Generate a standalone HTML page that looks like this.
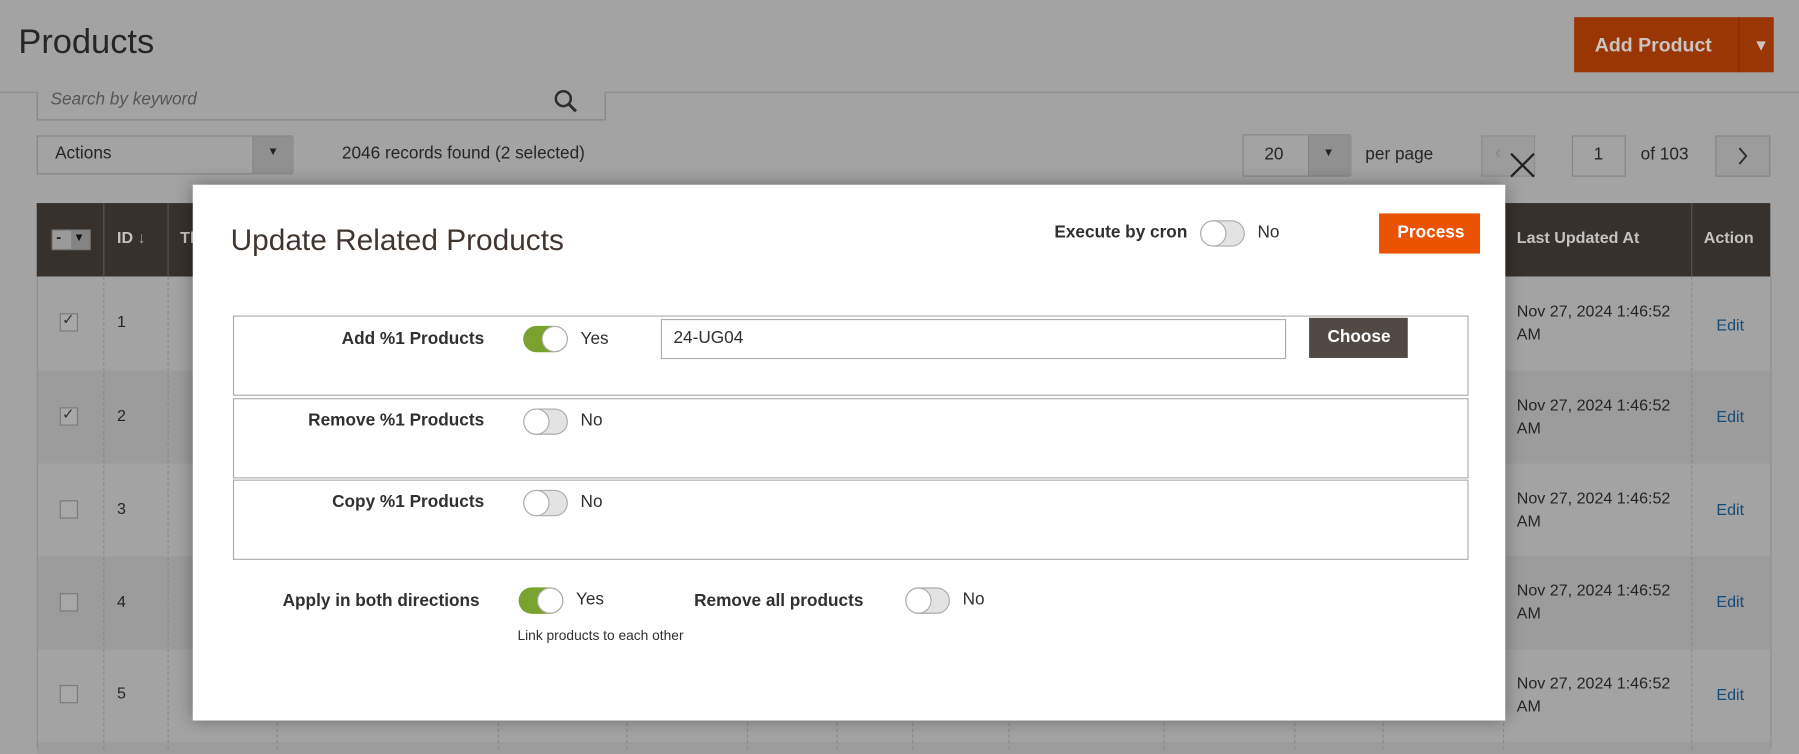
<!DOCTYPE html>
<html><head><meta charset="utf-8">
<style>
html,body{margin:0;padding:0;width:1799px;height:749px;overflow:hidden;background:#a3a3a3;}
#w{position:absolute;left:0;top:0;width:1568px;height:653px;transform:scale(1.14732);transform-origin:0 0;font-family:"Liberation Sans",sans-serif;color:#2b2b2b;background:#a3a3a3;}
.a{position:absolute;}
.t{position:absolute;white-space:nowrap;}
.row{position:absolute;left:32px;width:1511px;}
.vd{position:absolute;top:241px;height:412px;border-left:1px dashed #8a8a8a;}
.tg{position:absolute;width:39px;height:23px;border-radius:12px;box-sizing:border-box;}
.off{background:#e3e3e3;border:1px solid #adadad;}
.off::after{content:"";position:absolute;left:-1px;top:-1px;width:23px;height:23px;border-radius:50%;background:#fff;border:1px solid #adadad;box-sizing:border-box;}
.on{background:#79a22e;}
.on::after{content:"";position:absolute;right:0;top:0;width:23px;height:23px;border-radius:50%;background:#fff;border:1px solid #adadad;box-sizing:border-box;}
.lbl{position:absolute;font-size:15px;font-weight:bold;color:#303030;text-align:right;white-space:nowrap;}
.cb{position:absolute;left:52px;width:16px;height:16px;border:1px solid #7a7a7a;box-sizing:border-box;background:#a8a8a8;}
.date{position:absolute;left:1322px;font-size:14px;line-height:20px;color:#252525;}
.edit{position:absolute;left:1496px;font-size:14px;color:#164c78;}
.id{position:absolute;left:102px;font-size:14px;color:#252525;}
</style></head><body><div id="w">
<!-- header -->
<div class="a" style="left:0;top:0;width:1568px;height:80px;border-bottom:1px solid #8c8c8c;background:#a3a3a3"></div>
<div class="t" style="left:16px;top:20px;font-size:30px;color:#262626">Products</div>
<div class="a" style="left:1372px;top:15px;width:174px;height:48px;background:#9a3603"></div>
<div class="a" style="left:1515px;top:15px;width:1px;height:48px;background:#7e2c02"></div>
<div class="t" style="left:1390px;top:30px;font-size:17px;font-weight:bold;color:#c9c4c2">Add Product</div>
<div class="t" style="left:1528px;top:31px;font-size:14px;color:#c9c4c2">▼</div>
<!-- search -->
<div class="a" style="left:32px;top:80px;width:494px;height:24px;border:1px solid #858585;border-top:none;background:#a3a3a3"></div>
<div class="t" style="left:44px;top:78px;font-size:15px;font-style:italic;color:#555">Search by keyword</div>
<svg class="a" style="left:482px;top:78px" width="24" height="22"><circle cx="9" cy="8" r="6.5" fill="none" stroke="#2e2e2e" stroke-width="2.2"/><line x1="13.5" y1="12.5" x2="20" y2="19" stroke="#2e2e2e" stroke-width="2.6"/></svg>
<!-- actions -->
<div class="a" style="left:32px;top:118px;width:223px;height:34px;border:1px solid #858585;box-sizing:border-box"></div>
<div class="a" style="left:220px;top:119px;width:35px;height:32px;background:#909090;border-left:1px solid #858585"></div>
<div class="t" style="left:233px;top:127px;font-size:10px;color:#222">▼</div>
<div class="t" style="left:48px;top:125px;font-size:15px;color:#262626">Actions</div>
<div class="t" style="left:298px;top:125px;font-size:15px;color:#262626">2046 records found (2 selected)</div>
<!-- pager -->
<div class="a" style="left:1083px;top:117px;width:94px;height:37px;border:1px solid #858585;box-sizing:border-box"></div>
<div class="a" style="left:1140px;top:118px;width:37px;height:35px;background:#909090;border-left:1px solid #858585"></div>
<div class="t" style="left:1153px;top:128px;font-size:10px;color:#222">▼</div>
<div class="t" style="left:1102px;top:126px;font-size:15px;color:#262626">20</div>
<div class="t" style="left:1190px;top:126px;font-size:15px;color:#262626">per page</div>
<div class="a" style="left:1291px;top:118px;width:47px;height:36px;border:1px solid #8e8e8e;background:#9c9c9c;box-sizing:border-box"></div>
<div class="t" style="left:1303px;top:125px;font-size:16px;color:#888">‹</div>
<svg class="a" style="left:1314px;top:131px" width="26" height="26"><path d="M3 3L23 23M23 3L3 23" stroke="#222" stroke-width="2"/></svg>
<div class="a" style="left:1370px;top:118px;width:47px;height:36px;border:1px solid #858585;box-sizing:border-box"></div>
<div class="t" style="left:1389px;top:126px;font-size:15px;color:#262626">1</div>
<div class="t" style="left:1430px;top:126px;font-size:15px;color:#262626">of 103</div>
<div class="a" style="left:1495px;top:118px;width:48px;height:36px;border:1px solid #858585;background:#9c9c9c;box-sizing:border-box"></div>
<svg class="a" style="left:1513px;top:127px" width="12" height="18"><path d="M3 2L9 9L3 16" fill="none" stroke="#2a2a2a" stroke-width="1.6"/></svg>
<!-- table -->
<div class="row" style="top:177px;height:64px;background:#36312d"></div>
<div class="a" style="left:90px;top:177px;width:1px;height:64px;background:#5a5451"></div>
<div class="a" style="left:146px;top:177px;width:1px;height:64px;background:#5a5451"></div>
<div class="a" style="left:1310px;top:177px;width:1px;height:64px;background:#5a5451"></div>
<div class="a" style="left:1474px;top:177px;width:1px;height:64px;background:#5a5451"></div>
<div class="a" style="left:45px;top:200px;width:34px;height:18px;background:#9a9a9a;border:1px solid #777;box-sizing:border-box"></div>
<div class="a" style="left:62px;top:201px;width:16px;height:16px;background:#848484"></div>
<div class="t" style="left:49px;top:199px;font-size:13px;color:#222;font-weight:bold">-</div>
<div class="t" style="left:64px;top:202px;font-size:10px;color:#111">▼</div>
<div class="t" style="left:102px;top:199px;font-size:14px;font-weight:bold;color:#c5c3c1">ID <span style="color:#8aa3b3;font-weight:normal">↓</span></div>
<div class="t" style="left:157px;top:199px;font-size:14px;font-weight:bold;color:#c5c3c1">Th</div>
<div class="t" style="left:1322px;top:199px;font-size:14px;font-weight:bold;color:#c5c3c1">Last Updated At</div>
<div class="t" style="left:1485px;top:199px;font-size:14px;font-weight:bold;color:#c5c3c1">Action</div>
<div class="row" style="top:241px;height:82px;background:#a3a3a3"></div>
<div class="row" style="top:323px;height:81px;background:#9c9c9c"></div>
<div class="row" style="top:404px;height:81px;background:#a3a3a3"></div>
<div class="row" style="top:485px;height:81px;background:#9c9c9c"></div>
<div class="row" style="top:566px;height:81px;background:#a3a3a3"></div>
<div class="row" style="top:647px;height:10px;background:#9c9c9c"></div>
<div class="a" style="left:32px;top:241px;width:1px;height:412px;background:#8e8e8e"></div>
<div class="a" style="left:1543px;top:241px;width:1px;height:412px;background:#8e8e8e"></div>
<div class="vd" style="left:90px"></div><div class="vd" style="left:146px"></div><div class="vd" style="left:241px"></div><div class="vd" style="left:434px"></div><div class="vd" style="left:546px"></div><div class="vd" style="left:651px"></div><div class="vd" style="left:729px"></div><div class="vd" style="left:795px"></div><div class="vd" style="left:879px"></div><div class="vd" style="left:1014px"></div><div class="vd" style="left:1128px"></div><div class="vd" style="left:1205px"></div><div class="vd" style="left:1310px"></div><div class="vd" style="left:1474px"></div>
<div class="cb" style="top:273px"></div><div class="t" style="left:54px;top:271px;font-size:13px;color:#333">✓</div>
<div class="cb" style="top:355px"></div><div class="t" style="left:54px;top:353px;font-size:13px;color:#333">✓</div>
<div class="cb" style="top:436px"></div>
<div class="cb" style="top:517px"></div>
<div class="cb" style="top:597px"></div>
<div class="id" style="top:272px">1</div><div class="id" style="top:354px">2</div><div class="id" style="top:435px">3</div><div class="id" style="top:516px">4</div><div class="id" style="top:596px">5</div>
<div class="date" style="top:261px">Nov 27, 2024 1:46:52<br>AM</div><div class="edit" style="top:275px">Edit</div>
<div class="date" style="top:343px">Nov 27, 2024 1:46:52<br>AM</div><div class="edit" style="top:355px">Edit</div>
<div class="date" style="top:424px">Nov 27, 2024 1:46:52<br>AM</div><div class="edit" style="top:436px">Edit</div>
<div class="date" style="top:504px">Nov 27, 2024 1:46:52<br>AM</div><div class="edit" style="top:516px">Edit</div>
<div class="date" style="top:585px">Nov 27, 2024 1:46:52<br>AM</div><div class="edit" style="top:597px">Edit</div>
<!-- modal -->
<div class="a" style="left:168px;top:161px;width:1144px;height:467px;background:#fff;box-shadow:0 0 14px rgba(0,0,0,0.35)"></div>
<div class="t" style="left:201px;top:194px;font-size:26px;color:#41362f">Update Related Products</div>
<div class="t" style="left:919px;top:194px;font-size:15px;font-weight:bold;color:#303030">Execute by cron</div>
<div class="tg off" style="left:1046px;top:192px"></div>
<div class="t" style="left:1096px;top:194px;font-size:15px;color:#303030">No</div>
<div class="a" style="left:1202px;top:186px;width:88px;height:35px;background:#eb5202"></div>
<div class="t" style="left:1218px;top:194px;font-size:15px;font-weight:bold;color:#fff">Process</div>
<div class="a" style="left:203px;top:275px;width:1077px;height:70px;border:1px solid #adadad;box-sizing:border-box"></div>
<div class="a" style="left:203px;top:347px;width:1077px;height:70px;border:1px solid #adadad;box-sizing:border-box"></div>
<div class="a" style="left:203px;top:418px;width:1077px;height:70px;border:1px solid #adadad;box-sizing:border-box"></div>
<div class="lbl" style="right:1146px;top:287px">Add %1 Products</div>
<div class="tg on" style="left:456px;top:284px"></div>
<div class="t" style="left:506px;top:287px;font-size:15px;color:#303030">Yes</div>
<div class="a" style="left:576px;top:278px;width:545px;height:35px;border:1px solid #adadad;box-sizing:border-box"></div>
<div class="t" style="left:587px;top:286px;font-size:15px;color:#303030">24-UG04</div>
<div class="a" style="left:1141px;top:277px;width:86px;height:35px;background:#514943"></div>
<div class="t" style="left:1157px;top:285px;font-size:15px;font-weight:bold;color:#fff">Choose</div>
<div class="lbl" style="right:1146px;top:358px">Remove %1 Products</div>
<div class="tg off" style="left:456px;top:356px"></div>
<div class="t" style="left:506px;top:358px;font-size:15px;color:#303030">No</div>
<div class="lbl" style="right:1146px;top:429px">Copy %1 Products</div>
<div class="tg off" style="left:456px;top:427px"></div>
<div class="t" style="left:506px;top:429px;font-size:15px;color:#303030">No</div>
<div class="lbl" style="right:1150px;top:515px">Apply in both directions</div>
<div class="tg on" style="left:452px;top:512px"></div>
<div class="t" style="left:502px;top:514px;font-size:15px;color:#303030">Yes</div>
<div class="t" style="left:605px;top:515px;font-size:15px;font-weight:bold;color:#303030">Remove all products</div>
<div class="tg off" style="left:789px;top:512px"></div>
<div class="t" style="left:839px;top:514px;font-size:15px;color:#303030">No</div>
<div class="t" style="left:451px;top:547px;font-size:12px;color:#303030">Link products to each other</div>
</div></body></html>
